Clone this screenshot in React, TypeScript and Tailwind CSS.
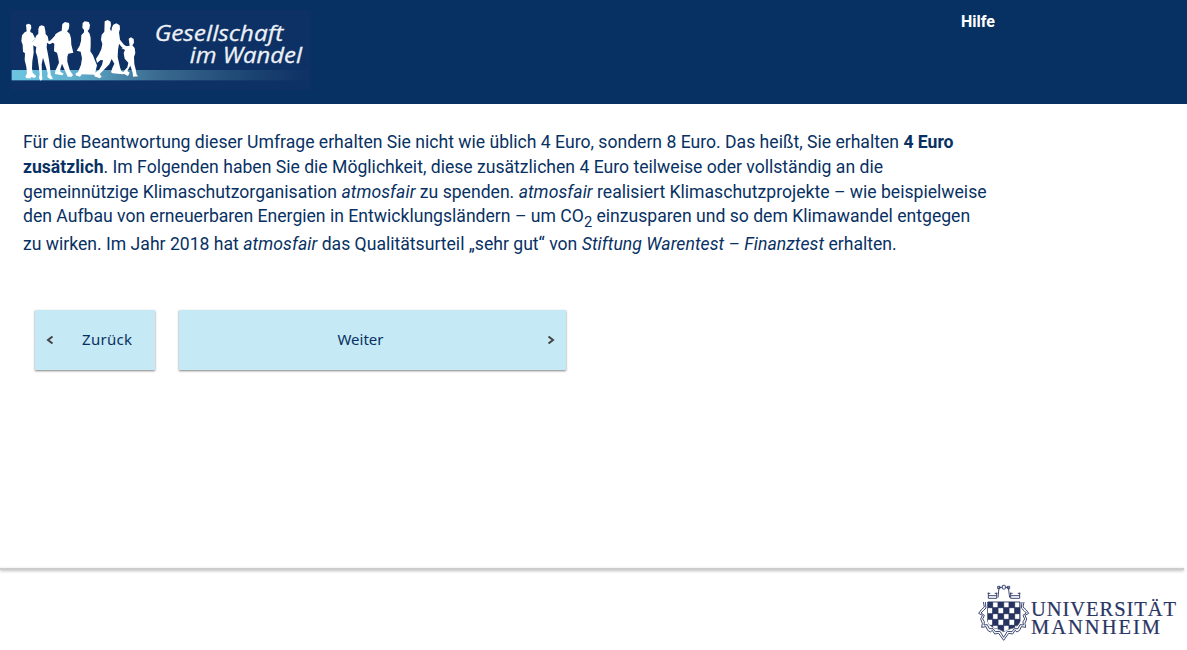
import React from "react";

function Brand() {
  return (
    <svg className="block h-20 w-[300px]" viewBox="33 30 900 240" role="img" aria-label="Gesellschaft im Wandel">
      <defs>
        <linearGradient id="bar" x1="0" x2="1" y1="0" y2="0">
          <stop offset="0" stopColor="#6cc5e0" />
          <stop offset="0.2" stopColor="#62b1cf" />
          <stop offset="0.48" stopColor="#3b6b91" />
          <stop offset="0.8" stopColor="#1b4472" />
          <stop offset="1" stopColor="#0f3064" />
        </linearGradient>
      </defs>
      <rect x="33" y="30" width="900" height="240" fill="#0d3165" />
      <rect x="35" y="210" width="898" height="31" fill="url(#bar)" />
      <g fill="#fff">
        <path d="M78 74L86 71L93 75L94 84L91 91L91 96L98 100L103 110L106 117L98 124L100 139L101 158L97 184L96 205L98 218L109 229L103 234L94 231L92 235L80 235L76 230L81 220L79 201L74 180L75 160L69 155L68 134L64 124L66 106L74 97L80 94Z" />
        <path d="M118 79L125 76L133 79L136 92L137 103L143 109L146 124L152 121L164 108L168 113L154 130L148 133L141 128L140 143L143 158L147 180L150 202L152 224L159 236L151 238L142 231L143 219L136 196L129 173L125 193L126 224L127 238L122 242L117 235L119 222L116 198L112 170L107 155L109 141L99 136L96 127L105 117L108 108L115 101L115 87Z" />
        <path d="M187 72L195 66L207 69L208 77L206 88L201 94L209 101L213 115L214 134L220 158L205 161L202 170L202 185L210 212L219 225L215 230L203 230L193 208L186 191L181 207L181 215L191 221L187 226L165 222L166 212L177 188L174 170L171 158L162 154L163 131L158 128L149 132L145 128L161 120L166 103L176 96L185 92Z" />
        <path d="M248 69L254 64L266 66L270 75L268 87L263 93L269 101L272 114L272 139L271 154L279 166L284 179L291 196L287 212L285 224L246 223L243 226L240 230L227 226L227 220L234 217L243 194L246 175L242 155L230 152L239 137L243 123L244 106L252 97L252 89L247 84Z" />
        <path d="M314 64L323 60L332 65L333 76L330 87L334 94L336 82L340 74L349 70L359 76L360 87L357 97L360 119L372 134L384 142L379 150L365 141L357 131L354 150L353 171L360 202L364 213L376 218L369 223L338 220L333 217L337 204L343 191L335 177L328 193L312 209L299 222L305 230L299 235L283 229L284 219L297 210L306 194L309 181L302 180L291 189L288 176L296 164L304 148L307 132L303 119L305 104L313 95Z" />
        <path d="M386 116L393 112L401 117L402 128L397 136L404 144L406 159L402 171L403 192L407 208L410 224L415 229L399 230L398 218L391 197L382 213L389 218L384 228L368 220L372 213L382 202L385 188L374 176L371 159L375 150L364 144L379 139L389 137Z" />
      </g>
      <g fill="#edf1f7" stroke="#edf1f7" strokeWidth="0.8" fontFamily="'Open Sans', 'Noto Sans', sans-serif" fontStyle="italic" fontSize="64">
        <text x="464" y="122" textLength="386" lengthAdjust="spacingAndGlyphs">Gesellschaft</text>
        <text x="569" y="190" textLength="337" lengthAdjust="spacingAndGlyphs">im Wandel</text>
      </g>
    </svg>
  );
}

function Crest() {
  return (
    <svg className="block h-[58px] w-[54px]" viewBox="21 72 162 174" aria-hidden="true">
      <clipPath id="field">
        <path d="M53 125H150V183Q148 196 132 203Q112 207 101 215Q91 207 71 203Q55 196 53 183Z" />
      </clipPath>
      <g fill="none" stroke="#2a3663" strokeWidth="2.7">
        <path d="M55 98V115H80V98M53 100H61M74 100H82M55 107H80M84 113L87 82H96M122 98V115H149V98M120 100H128M143 100H151M122 107H149M119 113L115 82H106" />
        <path d="M83 79V86H90V79ZM112 79V86H119V79Z" />
        <rect x="97" y="76" width="9" height="11" rx="2" />
        <path d="M40 126L43 141L34 149L26 160L37 166L32 177L37 190L35 202L48 200L53 211L61 216L67 211L74 222L86 220L101 241L116 220L128 222L135 211L141 216L149 211L154 200L167 202L165 190L170 177L165 166L176 160L168 149L159 141L162 126" />
        <path d="M46 126L48 144L40 152L33 159L43 166L38 177L43 185L42 195L52 194L58 206L69 206L76 215L90 214L101 232L112 214L126 215L133 206L144 206L150 194L160 195L159 185L164 177L159 166L169 159L162 152L154 144L156 126" />
        <path d="M53 126H150V183Q148 196 132 203Q112 207 101 215Q91 207 71 203Q55 196 53 183Z" />
      </g>
      <g clipPath="url(#field)">
        <path d="M53 125H150V215H53Z" fill="#fff" />
        <path d="M53 125H68V143H53ZM84 125H101V143H84ZM117 125H134V143H117ZM68 143H84V161H68ZM101 143H117V161H101ZM134 143H150V161H134ZM53 161H68V178H53ZM84 161H101V178H84ZM117 161H134V178H117ZM68 178H84V196H68ZM101 178H117V196H101ZM134 178H150V196H134ZM84 196H101V215H84ZM117 196H134V215H117ZM53 196H68V215H53Z" fill="#26325f" />
        <path d="M53 126H150M53 143H150M53 161H150M53 178H150M53 196H150M68 125V215M84 125V215M101 125V215M117 125V215M134 125V215M149 125V215" stroke="#26325f" strokeWidth="2.5" />
      </g>
    </svg>
  );
}

export default function App() {
  return (
    <div className="flex h-[650px] w-full flex-col overflow-hidden bg-white font-['Roboto',sans-serif] text-[#083163]">
      <header className="flex h-[104px] shrink-0 items-start bg-[#083163] pt-[10px] pl-[11px]">
        <Brand />
        <a href="#" className="ml-[650px] text-[16px] leading-[24px] font-bold text-white">Hilfe</a>
      </header>
      <main className="h-[464px] shrink-0">
        <p className="h-[206px] pt-[26.2px] pl-[23px] text-[17.6px] leading-[24.7px] whitespace-nowrap [&_i]:tracking-[0.06px]">
          Für die Beantwortung dieser Umfrage erhalten Sie nicht wie üblich 4 Euro, sondern 8 Euro. Das heißt, Sie erhalten <b>4 Euro</b><br />
          <b>zusätzlich</b>. Im Folgenden haben Sie die Möglichkeit, diese zusätzlichen 4 Euro teilweise oder vollständig an die<br />
          gemeinnützige Klimaschutzorganisation <i>atmosfair</i> zu spenden. <i>atmosfair</i> realisiert Klimaschutzprojekte – wie beispielweise<br />
          den Aufbau von erneuerbaren Energien in Entwicklungsländern – um CO<sub className="static align-sub text-[14.67px] leading-[20.5px]">2</sub> einzusparen und so dem Klimawandel entgegen<br />
          zu wirken. Im Jahr 2018 hat <i>atmosfair</i> das Qualitätsurteil „sehr gut“ von <i>Stiftung Warentest – Finanztest</i> erhalten.
        </p>
        <div className="ml-[35px] flex gap-6 font-['Noto_Sans',sans-serif] text-[15px]">
          <button className="flex h-[60px] w-[120px] items-center bg-[#c5e9f5] pl-[11px] shadow-[0_1px_2px_rgba(0,0,0,0.5)]">
            <svg className="h-2 w-2" viewBox="0 0 8 8" fill="none" stroke="#444" strokeWidth="2"><path d="M6.5 .5L2 4L6.5 7.5" /></svg>
            <span className="ml-7 pb-0.5 tracking-[0.3px]">Zurück</span>
          </button>
          <button className="flex h-[60px] w-[387px] items-center bg-[#c5e9f5] pr-[11px] shadow-[0_1px_2px_rgba(0,0,0,0.5)]">
            <span className="w-[363px] pb-0.5 text-center">Weiter</span>
            <svg className="ml-auto h-2 w-2" viewBox="0 0 8 8" fill="none" stroke="#444" strokeWidth="2"><path d="M1.5 .5L6 4L1.5 7.5" /></svg>
          </button>
        </div>
      </main>
      <footer className="flex flex-1 flex-col">
        <div className="mr-[3px] h-[2px] bg-[#cccccc] shadow-[0_1px_3px_rgba(0,0,0,0.3)]" />
        <div className="mt-[14px] ml-[977px] flex">
          <Crest />
          <svg className="mt-3 h-[42px] w-[150px]" viewBox="0 0 150 42" fill="#2a3663" stroke="#2a3663" strokeWidth="0.2" fontFamily="'Liberation Serif', serif" fontSize="20.5">
            <text x="0" y="19.5" textLength="145">UNIVERSITÄT</text>
            <text x="0" y="38" textLength="129">MANNHEIM</text>
          </svg>
        </div>
      </footer>
    </div>
  );
}
